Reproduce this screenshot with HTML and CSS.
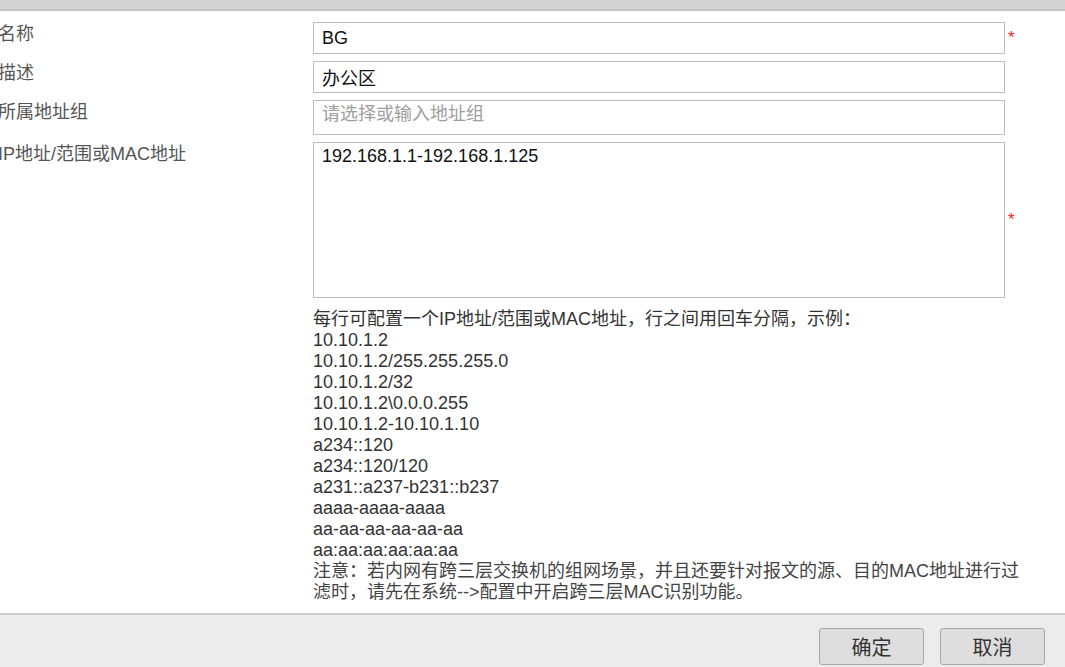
FILE: index.html
```html
<!DOCTYPE html>
<html lang="zh-CN">
<head>
<meta charset="utf-8">
<title>地址对象</title>
<link rel="stylesheet" href="styles.css">
</head>
<body>
<div class="topbar"></div>
<main class="form">
  <div class="row r1">
    <label class="lbl">名称</label>
    <input class="field" type="text" value="BG">
    <span class="req">*</span>
  </div>
  <div class="row r2">
    <label class="lbl">描述</label>
    <input class="field" type="text" value="办公区">
    <span class="req"></span>
  </div>
  <div class="row r3">
    <label class="lbl">所属地址组</label>
    <input class="field" type="text" placeholder="请选择或输入地址组">
    <span class="req"></span>
  </div>
  <div class="row r4">
    <label class="lbl">IP地址/范围或MAC地址</label>
    <textarea class="field area">192.168.1.1-192.168.1.125</textarea>
    <span class="req">*</span>
  </div>
  <div class="help">
    <div class="line">每行可配置一个IP地址/范围或MAC地址，行之间用回车分隔，示例：</div>
    <div class="line">10.10.1.2</div>
    <div class="line">10.10.1.2/255.255.255.0</div>
    <div class="line">10.10.1.2/32</div>
    <div class="line">10.10.1.2\0.0.0.255</div>
    <div class="line">10.10.1.2-10.10.1.10</div>
    <div class="line">a234::120</div>
    <div class="line">a234::120/120</div>
    <div class="line">a231::a237-b231::b237</div>
    <div class="line">aaaa-aaaa-aaaa</div>
    <div class="line">aa-aa-aa-aa-aa-aa</div>
    <div class="line">aa:aa:aa:aa:aa:aa</div>
    <div class="note">注意：若内网有跨三层交换机的组网场景，并且还要针对报文的源、目的MAC地址进行过滤时，请先在系统--&gt;配置中开启跨三层MAC识别功能。</div>
  </div>
</main>
<footer class="footer">
  <button class="btn" type="button">确定</button>
  <button class="btn" type="button">取消</button>
</footer>
</body>
</html>
```
FILE: styles.css
```css
html, body {
  margin: 0;
  padding: 0;
  background: #ffffff;
}
body {
  font-family: "Liberation Sans", "Noto Sans CJK SC", sans-serif;
  font-size: 18px;
  color: #333333;
  width: 1065px;
  height: 667px;
  overflow: hidden;
  display: flex;
  flex-direction: column;
}
.topbar {
  height: 9px;
  background: #d3d3d3;
  border-bottom: 2px solid #c4c4c4;
  flex: none;
}
.form {
  padding-top: 11px;
  display: grid;
  grid-template-columns: 313px 692px 1fr;
  align-content: start;
  row-gap: 7px;
  flex: 1;
}
.row {
  display: contents;
}
.lbl {
  color: #555555;
  height: 24px;
  line-height: 24px;
  white-space: nowrap;
  text-indent: -2px;
  align-self: start;
}
.field {
  box-sizing: border-box;
  width: 692px;
  height: 32px;
  margin: 0;
  border: 1px solid #bcbcc3;
  border-radius: 0;
  padding: 0 8px;
  font-family: "Liberation Sans", "Noto Sans CJK SC", sans-serif;
  font-size: 18px;
  color: #111111;
  background: #ffffff;
  outline: none;
}
.field::placeholder {
  color: #9e9e9e;
}
.r3 .field {
  height: 35px;
  padding-bottom: 6px;
}
.area {
  height: 156px;
  padding: 3px 8px;
  line-height: 20px;
  resize: none;
  overflow: hidden;
}
.req {
  color: #ff2020;
  font-size: 17px;
  line-height: 18px;
  padding-left: 3px;
  align-self: center;
}
.help {
  grid-column: 2 / 4;
  margin-top: 4px;
  line-height: 21px;
  color: #333333;
  width: 710px;
}
.help .line {
  height: 21px;
}
.help .note {
  height: 42px;
  color: #444444;
}
.footer {
  flex: none;
  height: 54px;
  border-top: 2px solid #cdcdcd;
  background: #ececec;
  display: flex;
  justify-content: flex-end;
  align-items: flex-start;
  gap: 16px;
  padding: 13px 20px 0 0;
  box-sizing: border-box;
}
.btn {
  width: 105px;
  height: 37px;
  flex: none;
  background: #dedede;
  border: 1px solid #a8a8a8;
  border-radius: 3px;
  font-family: "Liberation Sans", "Noto Sans CJK SC", sans-serif;
  font-size: 20px;
  color: #333333;
  padding: 0;
}
```
